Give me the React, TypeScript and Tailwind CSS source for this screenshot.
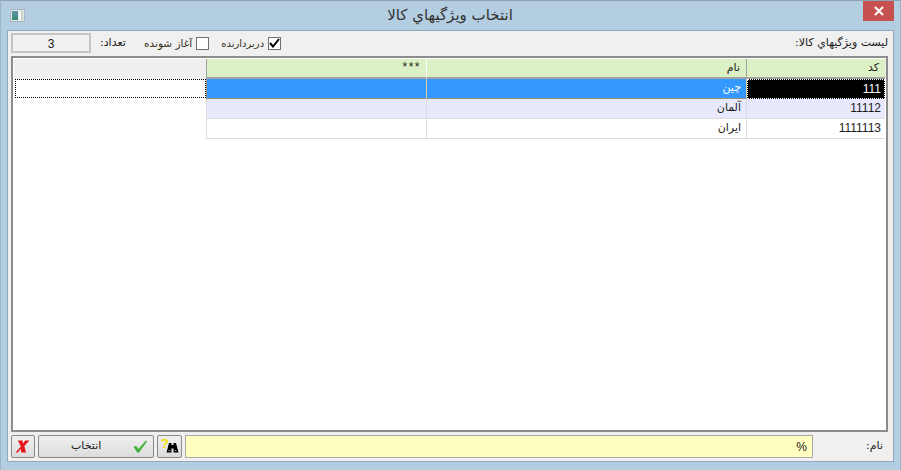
const rows = [
	{ code: "111", name: "چين", bg: "bg-[#3399ff]", text: "text-white", line: "border-[#9a8f80]" },
	{ code: "11112", name: "آلمان", bg: "bg-[#e9e9fd]", text: "text-[#1a1a1a]", line: "border-[#dcdcdc]" },
	{ code: "1111113", name: "ايران", bg: "bg-white", text: "text-[#1a1a1a]", line: "border-[#dcdcdc]" },
];

function WindowIcon() {
	return (
		<div className="flex h-[13px] w-[15px] border border-[#a9b5bf] bg-[#dfe6ea] p-px">
			<div className="w-[7px] bg-gradient-to-b from-[#5f93a8] to-[#2f8f6c]" />
			<div className="ml-px w-[2px] bg-[#f4f7f4]" />
			<div className="w-[3px] bg-[#c6d8c4]" />
		</div>
	);
}

function RedX() {
	return (
		<svg width="16" height="13" viewBox="0 0 17 15">
			<path d="M2.5 0.5H8L8.5 4.2L11 0.5H16L10 6.8L12 14.5H6.5L5.8 10L2.6 14.5H0L6 7.6Z" fill="#e8141c" />
		</svg>
	);
}

function GreenCheck() {
	return (
		<svg width="15" height="15" viewBox="0 0 18 16">
			<path d="M0.8 8.5L3.6 7L6.6 11L15.5 0.8L17 1.6L7 15.5H5.4Z" fill="#3fae3a" />
			<path d="M3.6 7L6.6 11L15.5 0.8" fill="none" stroke="#8ad86f" strokeWidth="1" />
		</svg>
	);
}

function Binoculars() {
	return (
		<svg width="20" height="17" viewBox="0 0 20 17">
			<path d="M2 3.5C2 1.3 7 1.3 7 3.5C7 5.5 4.4 5 4.4 7.2M4.4 8V10" fill="none" stroke="#f2e21c" strokeWidth="2" />
			<path d="M9 5H11.5V7H13.5V5H16L18.5 14.5H13.5V10.5H11.5V14.5H6.5Z" fill="#000" />
			<path d="M8.5 12H10.5V13H8.5ZM14.5 12H16.5V13H14.5Z" fill="#8a8a8a" />
		</svg>
	);
}

function CheckBox({ checked }: { checked: boolean }) {
	return (
		<div className="flex h-[13px] w-[13px] items-center justify-center border border-[#707070] bg-white">
			{checked && (
				<svg width="11" height="10" viewBox="0 0 11 10">
					<path d="M1 5L4 8.5L10 1" fill="none" stroke="#000" strokeWidth="2" />
				</svg>
			)}
		</div>
	);
}

function GridRow({ row, index }: { row: (typeof rows)[number]; index: number }) {
	const selected = index === 0;
	return (
		<div className="flex h-5">
			<div className="w-[192px] pl-px">
				{selected && <div className="h-[19px] border border-dotted border-black bg-white" />}
			</div>
			<div className={`w-[221px] border-r border-b border-l ${row.bg} ${row.line} ${selected ? "border-r-[#e5cfa8]" : ""}`} />
			<div className={`flex w-[320px] items-center justify-end border-r border-b pr-[5px] text-[11px] ${row.bg} ${row.line} ${row.text} ${selected ? "border-r-[#e5cfa8]" : ""}`}>
				{row.name}
			</div>
			<div
				className={
					selected
						? "flex w-[138px] items-center justify-end border border-dotted border-white bg-black pr-[3px] pb-px font-['Liberation_Sans',sans-serif] text-[12px] text-white"
						: `flex w-[138px] items-center justify-end border-b pr-[4px] pb-px font-['Liberation_Sans',sans-serif] text-[12px] ${row.bg} ${row.line} text-[#1a1a1a]`
				}
			>
				{row.code}
			</div>
		</div>
	);
}

export default function App() {
	return (
		<div className="flex h-[470px] w-[901px] flex-col border-x border-t border-[#9db4c8] border-t-[#8fa3b5] bg-[#b3cde1] font-['DejaVu_Sans',sans-serif] text-[10px] text-[#1a1a1a]">
			<div className="flex h-[29px] shrink-0 items-center pr-[6px] pl-[9px]">
				<WindowIcon />
				<div className="flex-1 pl-[12px] text-center text-[15px] text-[#333]">انتخاب ويژگيهاي كالا</div>
				<div className="-mt-[9px] flex h-5 w-[31px] items-center justify-center bg-[#c75050]">
					<svg width="10" height="10" viewBox="0 0 10 10">
						<path d="M1 1L9 9M9 1L1 9" stroke="#fff" strokeWidth="2" />
					</svg>
				</div>
			</div>
			<div className="mx-[6px] mb-2 flex min-h-0 flex-1 flex-col border border-[#8fa8bd] bg-[#f0f0f0] pt-[2px] pr-[5px] pb-[3px] pl-[3px]">
				<div className="flex h-5 shrink-0 items-center">
					<div className="flex h-5 w-20 items-center justify-center border-2 border-[#c4c4c4] pt-px font-['Liberation_Sans',sans-serif] text-[12px]">3</div>
					<div dir="rtl" className="ml-[9px] w-[44px] pt-px text-left text-[11px]">تعداد:</div>
					<div className="pt-px text-[10.5px] text-[#3a3020]">آغاز شونده</div>
					<div className="ml-[4px]"><CheckBox checked={false} /></div>
					<div className="ml-[12px] pt-px text-[#3a3020]">دربردارنده</div>
					<div className="ml-[4px]"><CheckBox checked={true} /></div>
					<div dir="rtl" className="ml-auto pt-px text-[11px]">ليست ويژگيهاي كالا:</div>
				</div>
				<div className="mt-[3px] min-h-0 flex-1 border-2 border-[#8c8c8c] bg-white pt-px pl-px">
					<div className="flex h-5 bg-[#efefef]">
						<div className="w-[192px]" />
						<div className="flex w-[221px] items-center justify-end border-x border-b-2 border-[#a3a3a3] border-r-white bg-[#dcf0c6] pr-[5px] pb-[3px] font-['Liberation_Sans',sans-serif] text-[12px] tracking-[1.5px]">***</div>
						<div className="flex w-[320px] items-center justify-end border-r border-b-2 border-[#a3a3a3] bg-[#dcf0c6] pt-px pr-[6px] text-[11px]">نام</div>
						<div className="flex w-[138px] items-center justify-end border-b-2 border-[#a3a3a3] bg-[#dcf0c6] pt-px pr-[6px] text-[11px]">كد</div>
					</div>
					{rows.map((row, index) => (
						<GridRow key={row.code} row={row} index={index} />
					))}
				</div>
				<div className="mt-[3px] flex h-[23px] shrink-0 items-center">
					<div className="flex h-full w-[24px] items-center justify-center rounded-[2px] border border-[#8a8a8a] bg-gradient-to-b from-[#f0f0f0] to-[#dcdcdc]"><RedX /></div>
					<div className="ml-[3px] flex h-full w-[116px] items-center justify-between rounded-[2px] border border-[#8a8a8a] bg-gradient-to-b from-[#f0f0f0] to-[#dcdcdc] pr-[5px] pl-[32px] text-[11px]">
						<span>انتخاب</span>
						<GreenCheck />
					</div>
					<div className="ml-[3px] flex h-full w-[25px] items-center justify-center rounded-[2px] border border-[#8a8a8a] bg-gradient-to-b from-[#f0f0f0] to-[#dcdcdc]"><Binoculars /></div>
					<div className="ml-[3px] flex h-full w-[628px] items-center justify-end border border-[#a9a9a9] bg-[#ffffc0] pr-[5px] font-['Liberation_Sans',sans-serif] text-[12px]">%</div>
					<div dir="rtl" className="ml-auto pr-[5px] text-[11px]">نام:</div>
				</div>
			</div>
		</div>
	);
}
